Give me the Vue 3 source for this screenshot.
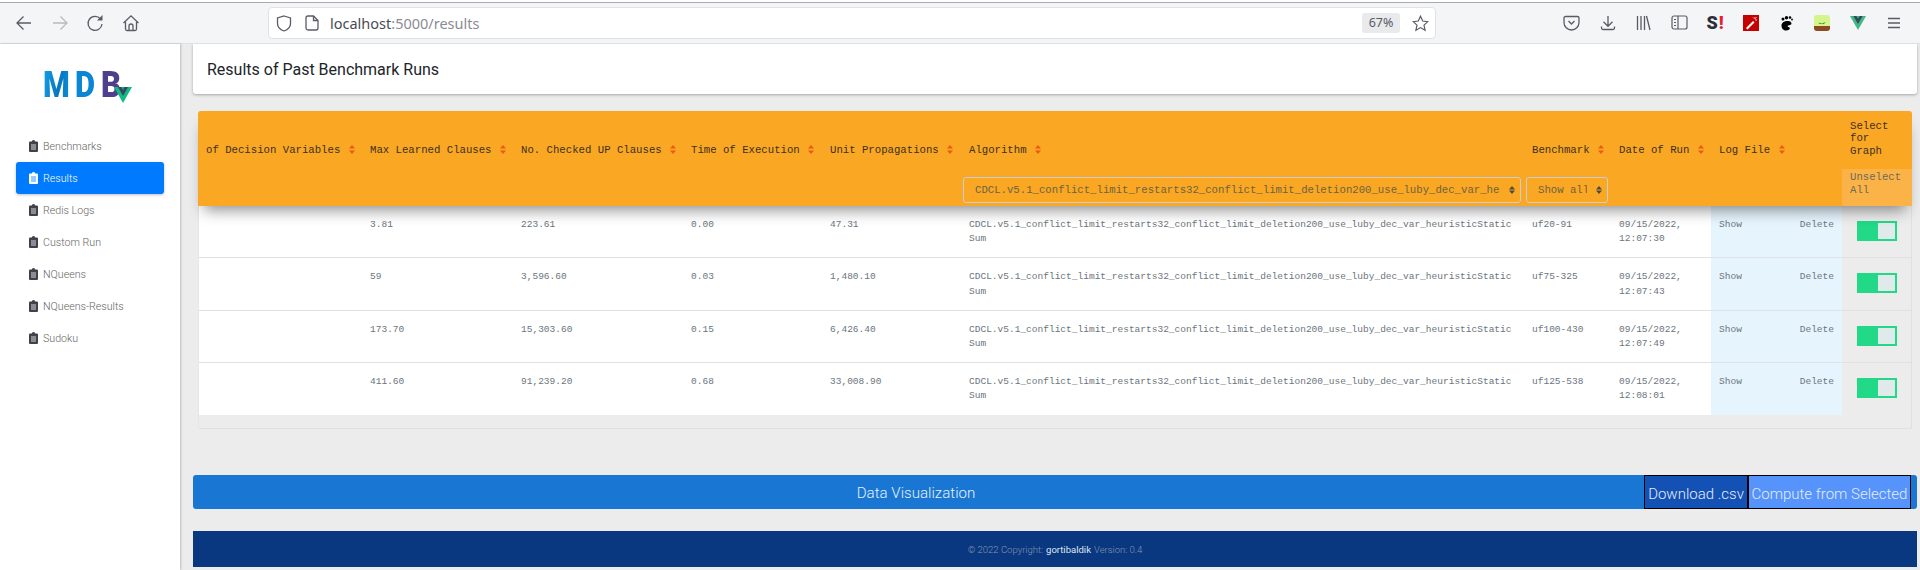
<template>
  <div class="page">
    <!-- BROWSER CHROME -->
    <header class="chrome">
      <div class="toolbar">
        <div class="nav-btns">
          <span class="tb-btn">
            <svg width="18" height="18" viewBox="0 0 18 18" fill="none" stroke="#5b5b66" stroke-width="1.3"><path d="M16 9H2M8.5 2.5 2 9l6.5 6.5" /></svg>
          </span>
          <span class="tb-btn">
            <svg width="18" height="18" viewBox="0 0 18 18" fill="none" stroke="#b9b9be" stroke-width="1.3"><path d="M2 9h14M9.500 2.500 16 9l-6.500 6.500" /></svg>
          </span>
          <span class="tb-btn">
            <svg width="18" height="18" viewBox="0 0 18 18" fill="none" stroke="#5b5b66" stroke-width="1.3"><path d="M14.500 5A7 7 0 1 0 16 10" /><path d="M11 6.500h5.500V1z" fill="#5b5b66" stroke="none" /></svg>
          </span>
          <span class="tb-btn">
            <svg width="18" height="18" viewBox="0 0 18 18" fill="none" stroke="#5b5b66" stroke-width="1.3"><path d="M1.500 9 9 1.800 16.500 9M3.500 8v7a1.500 1.500 0 0 0 1.500 1.500h8a1.500 1.500 0 0 0 1.500-1.500V8M7 16.500V12a2 2 0 0 1 4 0v4.500" /></svg>
          </span>
        </div>

        <div class="urlbar">
          <svg class="shield" width="16" height="17" viewBox="0 0 16 17" fill="none" stroke="#5b5b66" stroke-width="1.3"><path d="M8 1 14.500 3v5.500c0 3.500-2.800 6.200-6.500 7.500-3.700-1.300-6.500-4-6.500-7.500V3z" /></svg>
          <svg class="doc" width="14" height="16" viewBox="0 0 14 16" fill="none" stroke="#5b5b66" stroke-width="1.300"><path d="M3 1h5.500L13 5.500V13a2 2 0 0 1-2 2H3a2 2 0 0 1-2-2V3a2 2 0 0 1 2-2z" /><path d="M8.500 1v4.500H13" /></svg>
          <span class="url"><b>localhost</b>:5000/results</span>
          <span class="zoom">67%</span>
          <svg class="star" width="17" height="17" viewBox="0 0 17 17" fill="none" stroke="#5b5b66" stroke-width="1.2"><path d="M8.500 1.200 10.700 6l5.100.6-3.800 3.500 1.100 5.100-4.600-2.600-4.600 2.600L5 10.100 1.200 6.600 6.300 6z" /></svg>
        </div>

        <div class="addons">
          <span class="tb-btn">
            <svg width="17" height="16" viewBox="0 0 17 16" fill="none" stroke="#5b5b66" stroke-width="1.3"><path d="M2.500 1.500h12a1.500 1.500 0 0 1 1.500 1.500v4.500a7.500 7.500 0 0 1-15 0V3a1.500 1.500 0 0 1 1.500-1.500z" /><path d="m5.500 6 3 3 3-3" /></svg>
          </span>
          <span class="tb-btn">
            <svg width="16" height="16" viewBox="0 0 16 16" fill="none" stroke="#5b5b66" stroke-width="1.3"><path d="M8 1v10M3.500 6.800 8 11.300l4.500-4.500M1.500 11.500V13a1.500 1.500 0 0 0 1.500 1.500h10a1.500 1.500 0 0 0 1.500-1.500v-1.500" /></svg>
          </span>
          <span class="tb-btn">
            <svg width="15" height="16" viewBox="0 0 15 16" fill="none" stroke="#5b5b66" stroke-width="1.3"><path d="M1.500 1v14M5 1v14M8.500 1v14M10.500 1l3.500 14" /></svg>
          </span>
          <span class="tb-btn">
            <svg width="17" height="15" viewBox="0 0 17 15" fill="none" stroke="#5b5b66" stroke-width="1.200"><rect x="1" y="1" width="15" height="13" rx="2" /><path d="M7 1v13M3 4.500h2M3 7.500h2M3 10.500h2" /></svg>
          </span>
          <span class="tb-btn ext-s"><span class="s">S</span><span class="bang">!</span></span>
          <span class="tb-btn">
            <svg width="16" height="16" viewBox="0 0 16 16"><rect width="16" height="16" fill="#c40000" /><path d="m3 13 7-7 1.500 1.500-7 7z" fill="#fff" /><path d="M12 2v2M14 5h-2M10 2.500l1 1M13.500 2.500l-1 1" stroke="#f3c8c8" stroke-width="1" /></svg>
          </span>
          <span class="tb-btn">
            <svg width="13" height="16" viewBox="0 0 13 16" fill="#000"><path d="M7.500 6c3 0 4.500 1.500 3.800 3.300-.5 1.200-3.300.6-3.800 1.700-.3.800 2 .9 2.300 2 .3 1.500-1.500 2.500-3.800 2.500C3 15.500 1.500 13 1.500 10.500S4 6 7.500 6z" /><circle cx="3" cy="4" r="1.500" /><circle cx="6.500" cy="2.700" r="1.700" /><circle cx="10" cy="2.500" r="1.300" /><circle cx="12" cy="4.500" r=".9" /></svg>
          </span>
          <span class="tb-btn">
            <svg width="16" height="16" viewBox="0 0 16 16"><path d="M3 0h10a3 3 0 0 1 3 3v8H0V3a3 3 0 0 1 3-3z" fill="#d3f58b" /><path d="M0 11h16v2a3 3 0 0 1-3 3H3a3 3 0 0 1-3-3z" fill="#8c4a20" /><path d="M8 11V8.500L4.500 7.500C5 9 6.500 9.500 8 8.500l3.500-1.500c-.5 1.500-2 2.500-3.500 2z" fill="#4c8a2c" /></svg>
          </span>
          <span class="tb-btn">
            <svg width="16" height="14" viewBox="0 0 16 14"><path d="M0 0h16L8 14z" fill="#41b883" /><path d="M3.400 0h3L8 2.700 9.600 0h3L8 8z" fill="#35495e" /></svg>
          </span>
          <span class="tb-btn">
            <svg width="14" height="12" viewBox="0 0 14 12" stroke="#5b5b66" stroke-width="1.300"><path d="M1 1.500h12M1 6h12M1 10.500h12" /></svg>
          </span>
        </div>
      </div>
    </header>

    <div class="body">
      <!-- SIDEBAR -->
      <aside class="sidebar">
        <div class="logo">
          <span class="m">M</span><span class="d">D</span><span class="b">B</span>
          <svg class="logo-v" width="18" height="16" viewBox="0 0 18 16"><path d="M0 0h18L9 16z" fill="#12b985" /><path d="M4 0h3.500L9 3l1.500-3H14L9 9z" fill="#35495e" /></svg>
        </div>
        <nav class="side-nav">
          <a v-for="item in navItems" :key="item" class="side-link" :class="{ active: item === 'Results' }">
            <svg width="9" height="12" viewBox="0 0 9 12" fill="currentColor" class="clip"><path d="M1 1.500h1.800a1.700 1.500 0 0 1 3.400 0H8a1 1 0 0 1 1 1V11a1 1 0 0 1-1 1H1a1 1 0 0 1-1-1V2.500a1 1 0 0 1 1-1z" /><path d="M2 5h5M2 7h5M2 9h5" stroke="var(--clip-line)" stroke-width=".8" /></svg>
            {{ item }}
          </a>
        </nav>
      </aside>

      <main class="main">
        <div class="title-card">Results of Past Benchmark Runs</div>

        <section class="table-card">
          <!-- TABLE HEAD -->
          <div class="thead">
            <div class="grid labels">
              <div v-for="col in columns" :key="col" class="th">
                {{ col }}
                <svg width="6" height="9" viewBox="0 0 6 9" fill="#ea5a14" class="sort"><path d="M3 0 6 3.600H0zM3 9 0 5.400h6z" /></svg>
              </div>
              <div class="th"></div>
              <div class="th select-head">Select for Graph</div>
            </div>
            <div class="grid filters">
              <div class="filter" style="grid-column: 6">
                <select class="fselect algo">
                  <option>{{ algorithm }}</option>
                </select>
                <svg width="6" height="8" viewBox="0 0 6 8" fill="#4a4a40" class="caret"><path d="M3 0 6 3.400H0zM3 8 0 4.600h6z" /></svg>
              </div>
              <div class="filter">
                <select class="fselect show">
                  <option>Show all</option>
                </select>
                <svg width="6" height="8" viewBox="0 0 6 8" fill="#4a4a40" class="caret"><path d="M3 0 6 3.400H0zM3 8 0 4.600h6z" /></svg>
              </div>
              <div class="unselect" style="grid-column: 10">Unselect All</div>
            </div>
          </div>

          <!-- TABLE BODY -->
          <div v-for="row in rows" :key="row.bench" class="grid row">
            <div class="td"></div>
            <div class="td">{{ row.learned }}</div>
            <div class="td">{{ row.checked }}</div>
            <div class="td">{{ row.time }}</div>
            <div class="td">{{ row.unit }}</div>
            <div class="td algo-cell">{{ algorithm }}</div>
            <div class="td">{{ row.bench }}</div>
            <div class="td">{{ row.date }}</div>
            <div class="td log-cell"><span>Show</span><span>Delete</span></div>
            <div class="td toggle-cell">
              <span class="toggle"><span class="knob"></span></span>
            </div>
          </div>
        </section>

        <div class="viz-bar">
          <span class="viz-title">Data Visualization</span>
          <button class="viz-btn dark">Download .csv</button>
          <button class="viz-btn light">Compute from Selected</button>
        </div>

        <footer class="footer">
          © 2022 Copyright: <b>gortibaldik</b> Version: 0.4
        </footer>
      </main>
    </div>
  </div>
</template>

<script setup>
const navItems = ['Benchmarks', 'Results', 'Redis Logs', 'Custom Run', 'NQueens', 'NQueens-Results', 'Sudoku']

const columns = [
  'of Decision Variables',
  'Max Learned Clauses',
  'No. Checked UP Clauses',
  'Time of Execution',
  'Unit Propagations',
  'Algorithm',
  'Benchmark',
  'Date of Run',
  'Log File',
]

const algorithm = 'CDCL.v5.1_conflict_limit_restarts32_conflict_limit_deletion200_use_luby_dec_var_heuristicStaticSum'

const rows = [
  { learned: '3.81', checked: '223.61', time: '0.00', unit: '47.31', bench: 'uf20-91', date: '09/15/2022, 12:07:30' },
  { learned: '59', checked: '3,596.60', time: '0.03', unit: '1,480.10', bench: 'uf75-325', date: '09/15/2022, 12:07:43' },
  { learned: '173.70', checked: '15,303.60', time: '0.15', unit: '6,426.40', bench: 'uf100-430', date: '09/15/2022, 12:07:49' },
  { learned: '411.60', checked: '91,239.20', time: '0.68', unit: '33,008.90', bench: 'uf125-538', date: '09/15/2022, 12:08:01' },
]
</script>

<style>
html,
body {
  margin: 0;
  background: #ececec;
}
</style>

<style scoped>
.page {
  width: 1920px;
  height: 570px;
  overflow: hidden;
  display: flex;
  flex-direction: column;
  font-family: Roboto, sans-serif;
}

/* ===================== */
/* CHROME
/* ===================== */
.chrome {
  height: 44px;
  box-sizing: border-box;
  flex: none;
  background: #f4f5f7;
  border-top: 3px solid #fff;
  border-bottom: 1px solid #dfe0e4;
  position: relative;
}

.chrome::before {
  content: '';
  display: block;
  height: 1px;
  margin-top: -1px;
  background: #a9a9ae;
}

.toolbar {
  height: 39px;
  display: flex;
  align-items: center;
  padding: 0 7px 0 6px;
}

.nav-btns {
  display: flex;
  width: 262px;
}

.tb-btn {
  width: 35.8px;
  height: 32px;
  flex: none;
  display: flex;
  align-items: center;
  justify-content: center;
}

.urlbar {
  width: 1168px;
  height: 32px;
  box-sizing: border-box;
  background: #fff;
  border: 1px solid #e1e2e6;
  border-radius: 4px;
  display: flex;
  align-items: center;
  padding: 0 6px 0 7px;
  margin-top: 1px;
}

.doc {
  margin-left: 13px;
}

.url {
  margin-left: 11px;
  font: 14.5px 'Noto Sans', sans-serif;
  color: #8b8b94;
  flex: 1;
}

.url b {
  font-weight: 400;
  color: #4a4a55;
}

.zoom {
  width: 38px;
  height: 20px;
  border-radius: 3px;
  background: #e9eaec;
  color: #5b5b66;
  font: 12.5px/20px 'Noto Sans', sans-serif;
  text-align: center;
  margin-right: 12px;
}

.addons {
  display: flex;
  margin-left: 118px;
}

.ext-s {
  font: 900 18px/1 Roboto, sans-serif;
  color: #2b2e3d;
}

.bang {
  color: #e8202c;
  margin-left: 1px;
}

/* ===================== */
/* LAYOUT
/* ===================== */
.body {
  flex: 1;
  display: flex;
  min-height: 0;
}

.sidebar {
  width: 180px;
  flex: none;
  background: #fff;
  box-shadow: 1px 0 2px rgba(0, 0, 0, 0.2);
  z-index: 2;
}

.logo {
  position: relative;
  margin: 26px 0 0 43px;
  height: 34px;
  display: flex;
  font: 900 36px/30px Roboto, sans-serif;
}

.logo span {
  display: block;
  transform-origin: left center;
}

.logo .m {
  width: 32px;
  transform: scaleX(0.85);
  background: linear-gradient(100deg, #13a0e8 0%, #0678bf 55%, #0b91dd 100%);
  -webkit-background-clip: text;
  background-clip: text;
  color: transparent;
}

.logo .d {
  width: 26px;
  transform: scaleX(0.86);
  color: #0a86d4;
}

.logo .b {
  width: 26px;
  transform: scaleX(0.86);
  color: #4f3f8c;
}

.logo-v {
  position: absolute;
  left: 71px;
  top: 17px;
}

.side-nav {
  margin-top: 26px;
  display: flex;
  flex-direction: column;
  padding: 0 16px;
}

.side-link {
  --clip-line: #fff;
  height: 32px;
  display: flex;
  align-items: center;
  gap: 5px;
  padding-left: 13px;
  font-size: 10.67px;
  font-weight: 300;
  color: #666;
  border-radius: 3px;
}

.clip {
  color: #40424a;
}

.side-link.active {
  --clip-line: #007bff;
  background: #007bff;
  color: #fff;
  box-shadow: 0 1px 3px rgba(0, 0, 0, 0.25);
}

.side-link.active .clip {
  color: #fff;
}

.main {
  flex: 1;
  min-width: 0;
  padding: 0 3px 0 13px;
  background: #ececec;
}

.title-card {
  height: 50px;
  display: flex;
  align-items: center;
  padding-left: 14px;
  background: #fff;
  border-radius: 0 0 3px 3px;
  box-shadow: 0 1px 3px rgba(0, 0, 0, 0.3);
  font-size: 16px;
  color: #212529;
}

/* ===================== */
/* TABLE
/* ===================== */
.table-card {
  margin: 17px 5px 0;
  height: 318px;
  box-sizing: border-box;
  border-right: 1px solid #e0e0e2;
  border-bottom: 1px solid #e0e0e2;
  border-left: 1px solid #e6e6e8;
  border-radius: 3px;
}

.grid {
  display: grid;
  grid-template-columns: 163px 151px 170px 139px 139px 563px 87px 100px 131px 1fr;
}

.thead {
  position: relative;
  z-index: 1;
  background: #faa724;
  box-shadow: 0 10px 14px -6px rgba(0, 0, 0, 0.45);
  border-radius: 3px 3px 0 0;
  font: 10.67px 'Liberation Mono', monospace;
  color: #3a3020;
  margin-right: -1px;
  margin-left: -1px;
}

.labels {
  height: 58px;
  grid-template-columns: 164px 151px 170px 139px 139px 563px 87px 100px 65px 66px 70px;
  align-items: end;
}

.th {
  padding: 0 0 12px 8px;
  line-height: 13px;
  white-space: nowrap;
}

.sort {
  margin-left: 2px;
  vertical-align: -1px;
}

.select-head {
  white-space: normal;
  grid-column: 11;
  padding-right: 8px;
  line-height: 12.5px;
}

.filters {
  height: 37px;
  grid-template-columns: 164px 151px 170px 139px 139px 563px 87px 100px 131px 70px;
}

.filter {
  position: relative;
  padding: 8px 0 0 2px;
}

.fselect {
  appearance: none;
  width: 558px;
  height: 26px;
  box-sizing: border-box;
  padding: 0 20px 0 11px;
  background: transparent;
  border: 1px solid #c9cfd0;
  border-radius: 3px;
  font: 10.67px 'Liberation Mono', monospace;
  color: #6d6340;
  display: block;
}

.fselect.show {
  width: 82px;
}

.caret {
  position: absolute;
  right: 9px;
  top: 17px;
}

.unselect {
  background: #fbb347;
  color: #6f6a58;
  padding: 2px 8px 0;
  line-height: 12.5px;
}

.row {
  height: 52.33px;
  box-sizing: border-box;
  border-bottom: 1px solid #dee2e6;
  font: 9.53px/14.3px 'Liberation Mono', monospace;
  color: #6c757d;
  background: #fff;
}

.row:last-child {
  border-bottom: none;
}

.td {
  padding: 12px 8px 0;
}

.algo-cell {
  word-break: break-all;
}

.log-cell {
  display: flex;
  justify-content: space-between;
  background: #e6f4fd;
}

.toggle-cell {
  background: #ececec;
  padding: 15px 0 0 15px;
}

.toggle {
  display: block;
  width: 40px;
  height: 20px;
  background: #21d986;
  position: relative;
}

.knob {
  position: absolute;
  right: 2px;
  top: 2px;
  width: 17px;
  height: 16px;
  background: #e0eaea;
}

/* ===================== */
/* BOTTOM
/* ===================== */
.viz-bar {
  margin-top: 46px;
  height: 34px;
  display: flex;
  align-items: stretch;
  padding-right: 6px;
  background: #1976d2;
  border-radius: 3px;
  color: #e3f2fd;
}

.viz-title {
  flex: 1;
  display: flex;
  align-items: center;
  justify-content: center;
  padding: 2px 5px 0 0;
  font-size: 15.1px;
  font-weight: 300;
}

.viz-btn {
  padding: 3px 0 0;
  border: 1px solid #000;
  font: 300 15px Roboto, sans-serif;
  color: #e3ecff;
  white-space: nowrap;
}

.viz-btn.dark {
  width: 104px;
  background: #1351b4;
}

.viz-btn.light {
  width: 163px;
  background: #5693fa;
}

.footer {
  margin-top: 22px;
  height: 36px;
  display: flex;
  align-items: center;
  justify-content: center;
  gap: 3px;
  background: #0a3880;
  color: #8495b2;
  font-size: 9.5px;
  font-weight: 300;
}

.footer b {
  font-weight: 400;
  color: #dfe6f2;
}
</style>
